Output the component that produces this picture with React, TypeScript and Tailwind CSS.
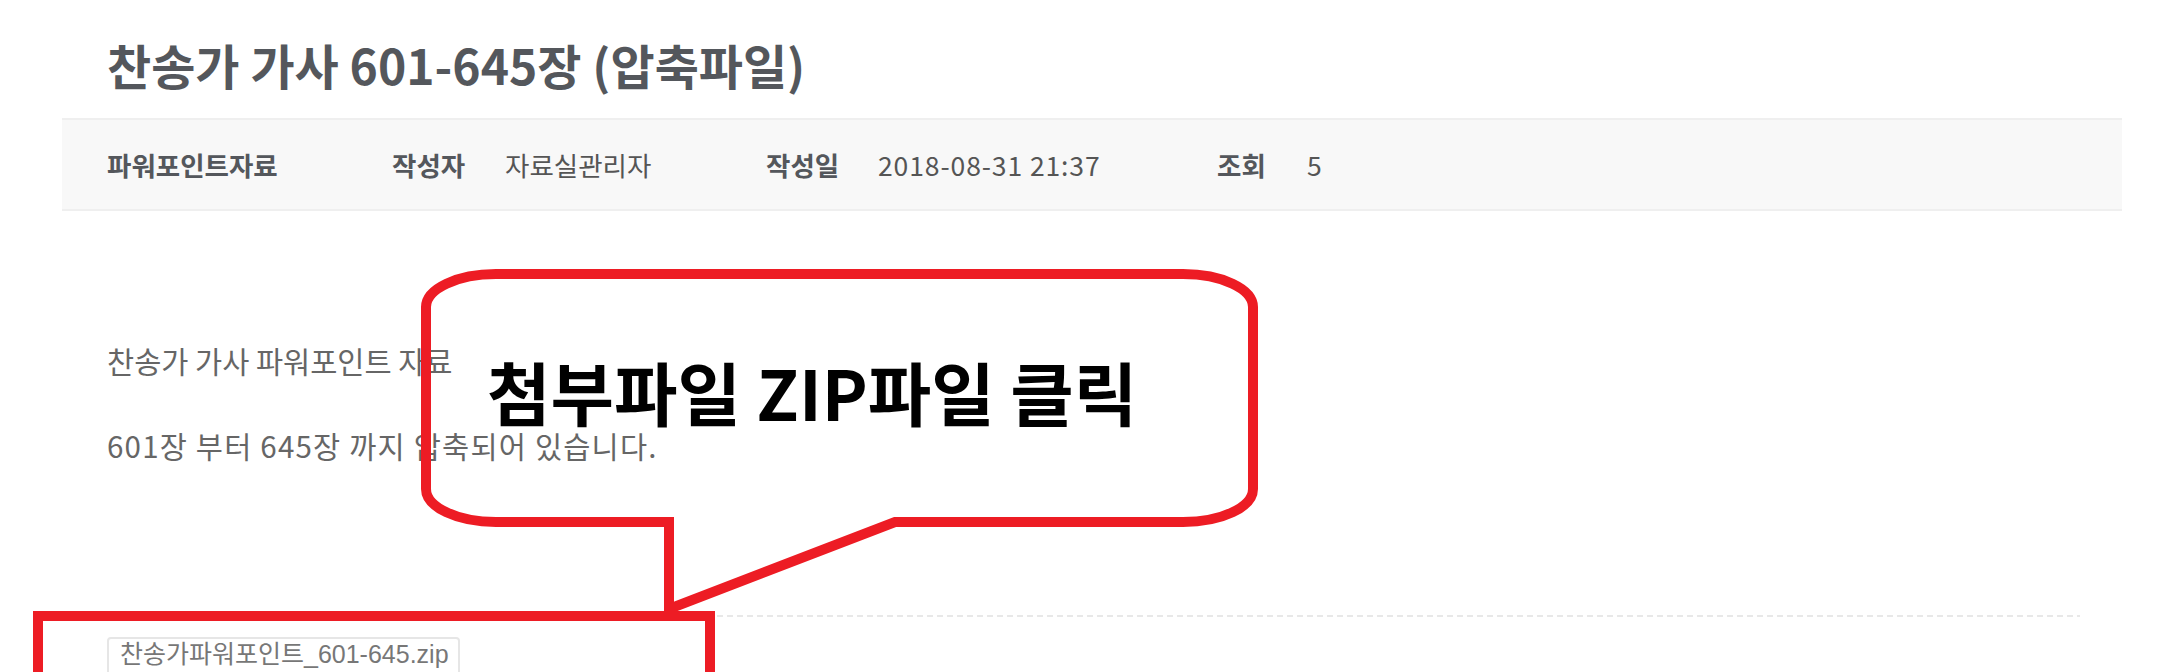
import React from 'react';

const RED = '#ed1c24';

const MetaBar: React.FC = () => {
    return (
        <div className="flex items-center h-[93px] px-[45px] bg-[#f8f8f8] border-y-2 border-[#efefef] text-[26.5px] text-[#555] whitespace-nowrap">
            <span className="w-[285px] font-bold text-[#54575c]">파워포인트자료</span>
            <span className="w-[113px] font-bold text-[#54575c]">작성자</span>
            <span className="w-[261px]">자료실관리자</span>
            <span className="w-[112px] font-bold text-[#54575c]">작성일</span>
            <span className="w-[339px] tracking-[0.9px]">2018-08-31 21:37</span>
            <span className="w-[90px] font-bold text-[#54575c]">조회</span>
            <span>5</span>
        </div>
    );
};

// speech bubble drawn over the page (annotation layer)
const Callout: React.FC = () => {
    return (
        <>
            <svg
                className="absolute left-0 top-0 pointer-events-none"
                width="2157"
                height="672"
                viewBox="0 0 2157 672"
            >
                <path
                    d="M496 274 H1183 A70 33 0 0 1 1253 307 V489 A70 33 0 0 1 1183 522 H895 L669 609 V522 H496 A70 33 0 0 1 426 489 V307 A70 33 0 0 1 496 274 Z"
                    fill="none"
                    stroke={RED}
                    strokeWidth="10"
                    strokeLinejoin="miter"
                />
            </svg>
            <div className="absolute left-[487px] top-[359px] text-[69px] leading-[64px] font-bold text-black whitespace-nowrap">
                첨부파일 ZIP파일 클릭
            </div>
            {/* box round the attachment */}
            <div className="absolute left-[33px] top-[611px] w-[682px] h-[72px] border-[10px] border-[#ed1c24]" />
        </>
    );
};

const App: React.FC = () => {
    return (
        <div
            className="relative w-full h-[672px] overflow-hidden bg-white"
            style={{ fontFamily: '"Noto Sans CJK KR", "Noto Sans", sans-serif' }}
        >
            <div className="pl-[62px] pr-[35px]">
                {/* title */}
                <div className="flex items-center h-[118px] pt-[10px] px-[45px]">
                    <h1 className="text-[48px] leading-[52px] font-bold text-[#54575c] whitespace-nowrap">
                        찬송가 가사 601-645장 (압축파일)
                    </h1>
                </div>

                <MetaBar />

                {/* body */}
                <div className="px-[45px] text-[29.5px] leading-[40px] text-[#666] whitespace-nowrap">
                    <p className="pt-[129px]">찬송가 가사 파워포인트 자료</p>
                    <p className="mt-[45px] tracking-[1.2px]">601장 부터 645장 까지 압축되어 있습니다.</p>

                    <div className="mt-[150px] -mr-[3px] h-[2px] bg-[repeating-linear-gradient(to_right,#e8e8e8_0_6px,transparent_6px_10px)]" />

                    <div className="pt-[20px]">
                        <div
                            className="block w-[353px] h-[48px] pt-[1px] pl-[11px] border-2 border-[#e6e6e6] rounded-[4px] text-[25px] leading-[28px] text-[#777]"
                            style={{ fontFamily: '"Liberation Sans", "Noto Sans CJK KR", sans-serif' }}
                        >
                            찬송가파워포인트_601-645.zip
                        </div>
                    </div>
                </div>
            </div>

            <Callout />
        </div>
    );
};

export default App;
